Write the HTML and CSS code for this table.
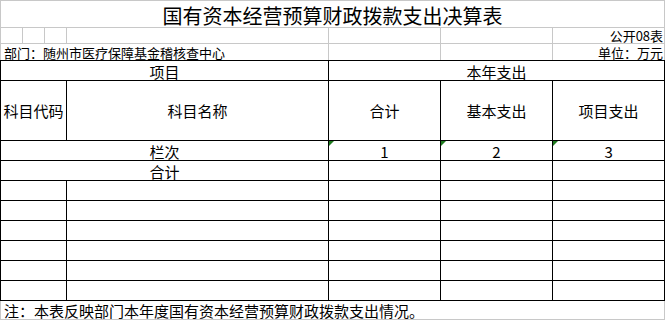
FILE: index.html
```html
<!DOCTYPE html>
<html lang="zh">
<head>
<meta charset="utf-8">
<title>国有资本经营预算财政拨款支出决算表</title>
<link rel="stylesheet" href="styles.css">
</head>
<body>
<table class="sheet">
  <colgroup>
    <col class="c-a"><col class="c-a"><col class="c-a"><col class="c-name"><col class="c-num"><col class="c-num"><col class="c-num">
  </colgroup>
  <tr class="r-title"><td colspan="7" class="title">国有资本经营预算财政拨款支出决算表</td></tr>
  <tr class="r-meta"><td></td><td></td><td></td><td></td><td></td><td></td><td class="right">公开08表</td></tr>
  <tr class="r-meta2"><td colspan="4" class="left">部门：随州市医疗保障基金稽核查中心</td><td></td><td></td><td class="right">单位：万元</td></tr>
  <tr class="g r-h1"><td colspan="4">项目</td><td colspan="3">本年支出</td></tr>
  <tr class="g r-h2"><td colspan="3">科目代码</td><td>科目名称</td><td>合计</td><td>基本支出</td><td>项目支出</td></tr>
  <tr class="g r-row"><td colspan="4">栏次</td><td class="flag">1</td><td class="flag">2</td><td class="flag">3</td></tr>
  <tr class="g r-row"><td colspan="4">合计</td><td></td><td></td><td></td></tr>
  <tr class="g r-row"><td colspan="3"></td><td></td><td></td><td></td><td></td></tr>
  <tr class="g r-row"><td colspan="3"></td><td></td><td></td><td></td><td></td></tr>
  <tr class="g r-row"><td colspan="3"></td><td></td><td></td><td></td><td></td></tr>
  <tr class="g r-row"><td colspan="3"></td><td></td><td></td><td></td><td></td></tr>
  <tr class="g r-row"><td colspan="3"></td><td></td><td></td><td></td><td></td></tr>
  <tr class="g r-row"><td colspan="3"></td><td></td><td></td><td></td><td></td></tr>
  <tr class="r-note"><td colspan="7" class="left note">注：本表反映部门本年度国有资本经营预算财政拨款支出情况。</td></tr>
</table>
</body>
</html>
```
FILE: styles.css
```css
html, body {
  margin: 0;
  padding: 0;
  background: #ffffff;
}

.sheet {
  border-collapse: collapse;
  table-layout: fixed;
  width: 665px;
  font-family: "Noto Sans CJK SC", "Liberation Sans", sans-serif;
  color: #000000;
}

.c-a { width: 22px; }
.c-name { width: 262px; }
.c-num { width: 112px; }

.sheet td {
  padding: 0;
  border-right: 1px solid #c8c8c8;
  border-bottom: 1px solid #c8c8c8;
  text-align: center;
  vertical-align: middle;
  font-size: 15px;
  line-height: 16px;
  white-space: nowrap;
}

.sheet td:first-child {
  border-left: 1px solid #c8c8c8;
}

.r-title td {
  border-top: 1px solid #c8c8c8;
}

.r-title { height: 27px; }
.r-meta { height: 16px; }
.r-meta2 { height: 17px; }
.r-h1 { height: 20px; }
.r-h2 { height: 60px; }
.r-row { height: 20px; }
.r-note { height: 19px; }

.sheet .title {
  font-size: 20px;
  line-height: 22px;
  padding-top: 3px;
}

.sheet .r-meta td,
.sheet .r-meta2 td {
  font-size: 13px;
  line-height: 14px;
  padding-top: 1px;
}

.sheet .r-meta2 td {
  border-bottom: 1px solid #000000;
}

.sheet .left {
  text-align: left;
  padding-left: 3px;
}

.sheet .right {
  text-align: right;
  padding-right: 1px;
}

.sheet .g td {
  border-right: 1px solid #000000;
  border-bottom: 1px solid #000000;
}

.sheet .g td:first-child {
  border-left: 1px solid #000000;
}

.sheet .g.r-h1 td,
.sheet .g.r-row td {
  padding-top: 2px;
}

.flag {
  position: relative;
}

.flag::before {
  content: "";
  position: absolute;
  left: 0;
  top: 0;
  width: 0;
  height: 0;
  border-top: 5px solid #1e7a1e;
  border-right: 5px solid transparent;
}

.sheet .note {
  font-size: 15px;
  padding-top: 1px;
}
```
